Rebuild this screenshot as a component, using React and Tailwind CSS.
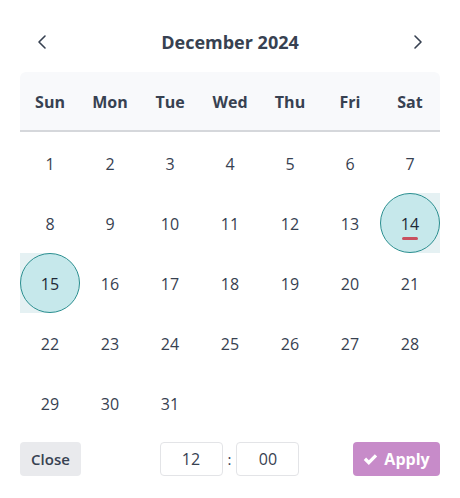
import React, { useState } from "react";
import { ChevronLeft, ChevronRight } from "lucide-react";

const days = ["Sun", "Mon", "Tue", "Wed", "Thu", "Fri", "Sat"];

function App() {
  const [hour, setHour] = useState("12");
  const [minute, setMinute] = useState("00");

  // December 2024 starts on a Sunday
  const cells = Array.from({ length: 31 }, (_, i) => i + 1);
  const rangeStart = 14;
  const rangeEnd = 15;
  const today = 14;

  return (
    <div
      className="w-[460px] h-[498px] bg-white px-5 pt-6 text-[#374151]"
      style={{ fontFamily: '"Open Sans", "Noto Sans", sans-serif' }}
    >
      {/* Month header */}
      <div className="flex items-center justify-between h-9 px-[10px]">
        <button className="text-[#374151]">
          <ChevronLeft className="w-6 h-6" strokeWidth={1.6} />
        </button>
        <h2 className="text-[18px] font-bold">December 2024</h2>
        <button className="text-[#374151]">
          <ChevronRight className="w-6 h-6" strokeWidth={1.6} />
        </button>
      </div>

      {/* Weekday row */}
      <div className="grid grid-cols-7 mt-3 h-[60px] bg-[#f8f9fb] rounded-t-md border-b-2 border-[#d5d7db]">
        {days.map((d) => (
          <div key={d} className="flex items-center justify-center pt-[2px] text-[16px] font-bold">
            {d}
          </div>
        ))}
      </div>

      {/* Days */}
      <div className="grid grid-cols-7 mt-[1px]">
        {cells.map((n) => {
          const isStart = n === rangeStart;
          const isEnd = n === rangeEnd;
          const selected = isStart || isEnd;
          return (
            <div key={n} className="relative h-[60px] flex items-center justify-center pt-[2px]">
              {isStart && <div className="absolute inset-y-0 right-0 w-1/2 bg-[#e5f1f3]" />}
              {isEnd && <div className="absolute inset-y-0 left-0 w-1/2 bg-[#e5f1f3]" />}
              <div
                className={`absolute inset-0 m-auto w-[60px] h-[60px] rounded-full ${
                  selected ? "bg-[#c6e8eb] border-[1.5px] border-[#2b8f90]" : ""
                }`}
              />
              <span className={`relative text-[16px] ${selected ? "text-[#1f2937]" : ""}`}>{n}</span>
              {n === today && (
                <span className="absolute bottom-[13px] left-1/2 -translate-x-1/2 w-4 h-[3px] rounded-sm bg-[#c8505f]" />
              )}
            </div>
          );
        })}
      </div>

      {/* Footer */}
      <div className="flex items-center justify-between mt-[9px]">
        <button className="h-[34px] w-[61px] rounded bg-[#e9eaed] text-[15px] font-semibold text-[#374151]">
          Close
        </button>
        <div className="flex items-center gap-[5px] ml-[25px]">
          <input
            value={hour}
            onChange={(e) => setHour(e.target.value)}
            className="w-[63px] h-[34px] border border-[#e3e4e7] rounded text-center text-[16px] outline-none"
          />
          <span className="text-[15px]">:</span>
          <input
            value={minute}
            onChange={(e) => setMinute(e.target.value)}
            className="w-[63px] h-[34px] border border-[#e3e4e7] rounded text-center text-[16px] outline-none"
          />
        </div>
        <button className="h-[34px] w-[87px] flex items-center justify-center gap-[6px] rounded bg-[#c78bc9] text-white text-[16px] font-bold">
          <svg viewBox="0 0 16 16" className="w-[15px] h-[15px]" fill="currentColor">
            <path d="M0.8 8.4l2.5-2.5 2.9 2.9 6.4-6.4 2.5 2.5-8.9 8.9z" />
          </svg>
          Apply
        </button>
      </div>
    </div>
  );
}

export default App;
